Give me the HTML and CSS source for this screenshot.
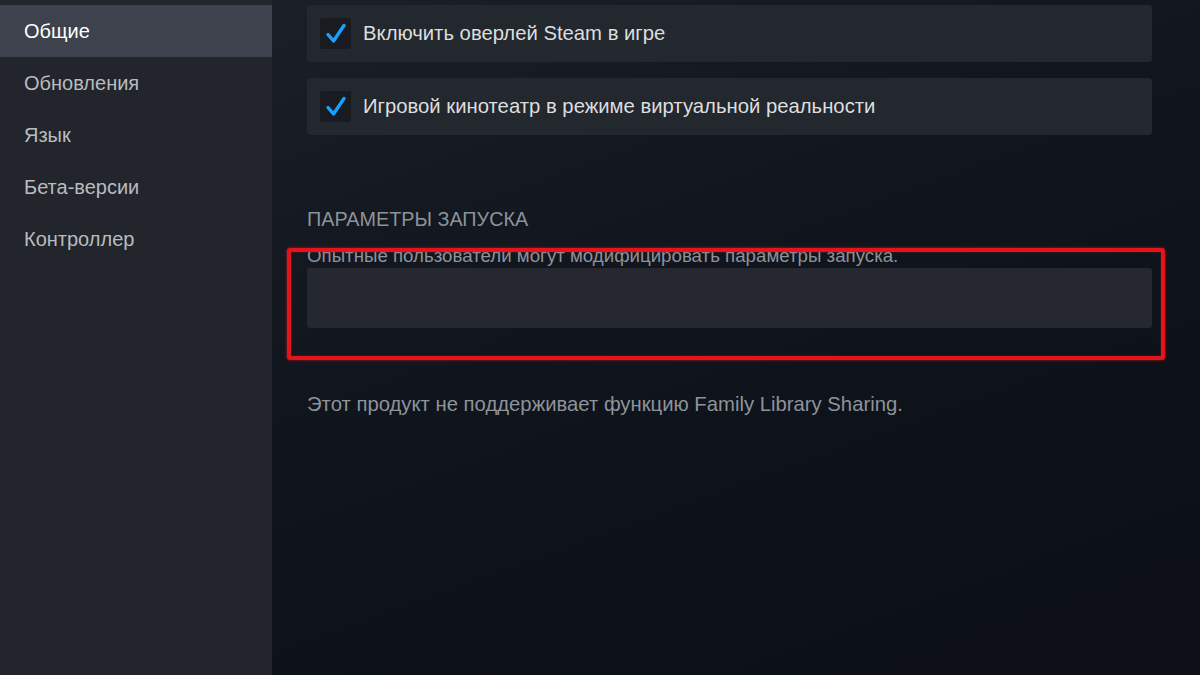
FILE: index.html
```html
<!DOCTYPE html>
<html lang="ru">
<head>
  <meta charset="UTF-8" />
  <title>Свойства игры</title>
  <link rel="stylesheet" href="styles.css">
</head>
<body>
  <div class="layout">

    <!-- Sidebar -->
    <nav class="sidebar">
      <div class="nav-item active">Общие</div>
      <div class="nav-item">Обновления</div>
      <div class="nav-item">Язык</div>
      <div class="nav-item">Бета-версии</div>
      <div class="nav-item">Контроллер</div>
    </nav>

    <!-- Content -->
    <main class="content">
      <div class="toggle-row">
        <span class="checkbox">
          <svg viewBox="0 0 30 30" width="30" height="30"><path d="M7 15.5 L12.5 22 L23 6.5" fill="none" stroke="#1a9fff" stroke-width="3.4" stroke-linecap="round" stroke-linejoin="round"/></svg>
        </span>
        <span class="toggle-label">Включить оверлей Steam в игре</span>
      </div>
      <div class="toggle-row">
        <span class="checkbox">
          <svg viewBox="0 0 30 30" width="30" height="30"><path d="M7 15.5 L12.5 22 L23 6.5" fill="none" stroke="#1a9fff" stroke-width="3.4" stroke-linecap="round" stroke-linejoin="round"/></svg>
        </span>
        <span class="toggle-label">Игровой кинотеатр в режиме виртуальной реальности</span>
      </div>

      <section class="launch">
        <h2 class="section-title">Параметры запуска</h2>
        <p class="section-desc">Опытные пользователи могут модифицировать параметры запуска.</p>
        <input class="launch-input" type="text">
        <div class="highlight"></div>
      </section>

      <p class="note">Этот продукт не поддерживает функцию Family Library Sharing.</p>
    </main>

  </div>
</body>
</html>
```

FILE: styles.css
```css
body {
  margin: 0;
  padding: 0;
  background: #0e1218;
  font-family: Arial, "Liberation Sans", sans-serif;
  overflow: hidden;
}

.layout {
  display: flex;
  height: 675px;
}

.sidebar {
  width: 272px;
  flex-shrink: 0;
  background: #22252c;
  padding-top: 5px;
}

.nav-item {
  height: 52px;
  display: flex;
  align-items: center;
  padding-left: 24px;
  font-size: 20px;
  color: #b8bcbf;
}

.nav-item.active {
  background: #3d424d;
  color: #ffffff;
}

.content {
  flex: 1;
  padding: 5px 48px 0 35px;
  background: linear-gradient(160deg, #1a1f28 0%, #121720 30%, #0d1118 70%, #0c1016 100%);
}

.toggle-row {
  display: flex;
  align-items: center;
  height: 57px;
  margin-bottom: 16px;
  padding-left: 13px;
  background: #23272e;
  border-radius: 3px;
}

.checkbox {
  width: 31px;
  height: 31px;
  background: #181b20;
  border-radius: 2px;
  display: flex;
  align-items: center;
  justify-content: center;
  margin-right: 12px;
}

.toggle-label {
  font-size: 20.3px;
  color: #dcdedf;
}

.launch {
  position: relative;
  margin-top: 72px;
}

.section-title {
  margin: 0;
  font-size: 19.8px;
  font-weight: normal;
  text-transform: uppercase;
  color: #8d939a;
  line-height: 24px;
}

.section-desc {
  margin: 15px 0 0;
  font-size: 18.7px;
  color: #8d939a;
  line-height: 20px;
}

.launch-input {
  display: block;
  box-sizing: border-box;
  width: 100%;
  height: 60px;
  margin-top: 2px;
  background: #25282f;
  border: none;
  border-radius: 3px;
  outline: none;
}

/* red annotation frame */
.highlight {
  position: absolute;
  left: -20px;
  right: -13px;
  top: 41px;
  height: 112px;
  box-sizing: border-box;
  border: 4px solid #e3141b;
  border-radius: 3px;
  box-shadow: 0 0 3px rgba(227, 20, 27, 0.8), inset 0 0 2px rgba(227, 20, 27, 0.6);
}

.note {
  margin: 64px 0 0;
  font-size: 20.3px;
  line-height: 24px;
  color: #8d939a;
}
```
